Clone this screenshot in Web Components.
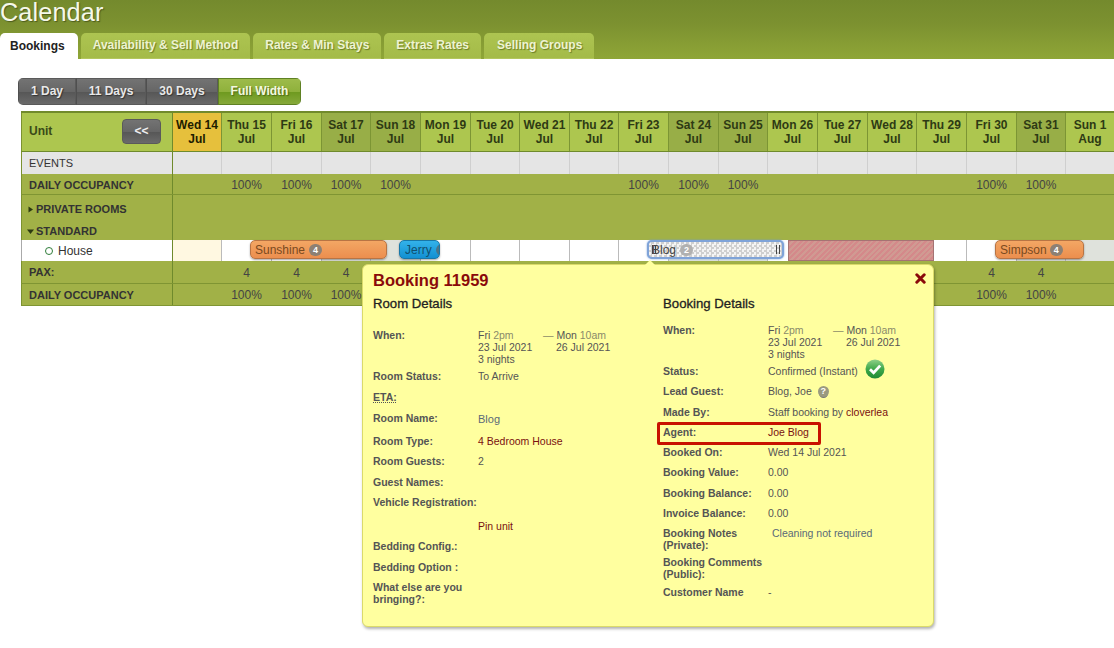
<!DOCTYPE html>
<html lang="en">
<head>
<meta charset="utf-8">
<title>Calendar</title>
<style>
html,body{margin:0;padding:0;background:#fff;height:648px;overflow:hidden;font-family:"Liberation Sans",Arial,sans-serif;}
</style>
</head>
<body>
<cal-page>
  <tab-bar slot="top" heading="Calendar">
    <tab-item active>Bookings</tab-item>
    <tab-item>Availability &amp; Sell Method</tab-item>
    <tab-item>Rates &amp; Min Stays</tab-item>
    <tab-item>Extras Rates</tab-item>
    <tab-item style="padding-left:13px">Selling Groups</tab-item>
  </tab-bar>
  <view-switch slot="top">
    <view-button>1 Day</view-button>
    <view-button>11 Days</view-button>
    <view-button>30 Days</view-button>
    <view-button active>Full Width</view-button>
  </view-switch>
  <cal-grid slot="top"></cal-grid>
  <booking-popup heading="Booking 11959">
    <info-col slot="left" heading="Room Details">
      <info-row label="When:" h="41" off="5"><stay-when></stay-when></info-row>
      <info-row label="Room Status:" h="21">To Arrive</info-row>
      <info-row label="&lt;u&gt;ETA:&lt;/u&gt;" h="21"></info-row>
      <info-row label="Room Name:" h="23"><span style="color:#5a6a78;font-size:11px;position:relative;top:1px">Blog</span></info-row>
      <info-row label="Room Type:" h="20"><span style="color:#7a1010">4 Bedroom House</span></info-row>
      <info-row label="Room Guests:" h="21">2</info-row>
      <info-row label="Guest Names:" h="20"></info-row>
      <info-row label="Vehicle Registration:" h="24"></info-row>
      <info-row label="" h="20"><span style="color:#7a1010">Pin unit</span></info-row>
      <info-row label="Bedding Config.:" h="21"></info-row>
      <info-row label="Bedding Option :" h="20"></info-row>
      <info-row label="What else are you bringing?:" h="24"></info-row>
    </info-col>
    <info-col slot="right" heading="Booking Details">
      <info-row label="When:" h="41"><stay-when></stay-when></info-row>
      <info-row label="Status:" h="20">
        <span style="display:inline-flex;align-items:center;gap:7px;height:12px">Confirmed (Instant)
          <svg width="20" height="20" viewBox="0 0 20 20" style="margin-top:-4px"><defs><linearGradient id="g" x1="0" y1="0" x2="0" y2="1"><stop offset="0" stop-color="#8fd08a"/><stop offset=".5" stop-color="#3fa94a"/><stop offset="1" stop-color="#1f8a35"/></linearGradient></defs><circle cx="10" cy="10" r="9.5" fill="url(#g)"/><path d="M5 10.2l3.6 3.6L15.2 6.6" fill="none" stroke="#fff" stroke-width="2.8"/></svg>
        </span>
      </info-row>
      <info-row label="Lead Guest:" h="21"><span style="display:inline-flex;align-items:center;gap:6px">Blog, Joe <help-badge></help-badge></span></info-row>
      <info-row label="Made By:" h="20">Staff booking by <span style="color:#7a1010">cloverlea</span></info-row>
      <info-row label="Agent:" h="20"><span style="color:#7a1010">Joe Blog</span></info-row>
      <info-row label="Booked On:" h="20">Wed 14 Jul 2021</info-row>
      <info-row label="Booking Value:" h="21">0.00</info-row>
      <info-row label="Booking Balance:" h="20">0.00</info-row>
      <info-row label="Invoice Balance:" h="20">0.00</info-row>
      <info-row label="Booking Notes (Private):" h="29"><span style="color:#5a6a78;margin-left:4px">Cleaning not required</span></info-row>
      <info-row label="Booking Comments (Public):" h="30"></info-row>
      <info-row label="Customer Name" h="20">-</info-row>
    </info-col>
  </booking-popup>
</cal-page>
<script>
function shadow(el, html){ const r = el.attachShadow({mode:'open'}); r.innerHTML = html; return r; }
const FONT = '"Liberation Sans",Arial,sans-serif';

customElements.define('cal-page', class extends HTMLElement{
  constructor(){ super(); shadow(this, `<style>
    :host{display:block;position:relative;width:1114px;height:648px;overflow:hidden;font-family:${FONT};color:#333}
    .top{display:flex;flex-direction:column}
  </style><div class="top"><slot name="top"></slot></div><slot></slot>`); }
});

customElements.define('tab-bar', class extends HTMLElement{
  constructor(){ super(); shadow(this, `<style>
    :host{display:block;height:59px;background:linear-gradient(#748a2d,#7c9130 40%,#8fa637);}
    h1{margin:0;height:33px;font:400 25.3px/24px ${FONT};color:#f6f8ea;text-shadow:1px 1px 1px #4d5c1c;letter-spacing:.1px}
    nav{display:flex;gap:3px;height:26px}
  </style><h1>${this.getAttribute('heading')}</h1><nav><slot></slot></nav>`); }
});

customElements.define('tab-item', class extends HTMLElement{
  constructor(){ super(); shadow(this, `<style>
    :host{display:flex;align-items:center;height:26px;padding:0 12px 2px;box-sizing:border-box;border-radius:5px 5px 0 0;
      background:linear-gradient(#adc451,#a4bb48);font:700 12px ${FONT};color:#eef3d2;text-shadow:1px 1px 1px #6a7d26;
      border-bottom:1px solid #b3c65e}
    :host([active]){background:#fff;color:#222;text-shadow:none;border-bottom:0;padding:0 13px 0 10px}
  </style><slot></slot>`); }
});

customElements.define('view-switch', class extends HTMLElement{
  constructor(){ super(); shadow(this, `<style>
    :host{display:flex;width:283px;height:27px;margin:19px 0 6px 18px;border-radius:5px;overflow:hidden;box-sizing:border-box;}
  </style><slot></slot>`); }
});

customElements.define('view-button', class extends HTMLElement{
  constructor(){ super(); shadow(this, `<style>
    :host{display:flex;align-items:center;justify-content:center;height:27px;padding-bottom:2px;box-sizing:border-box;font:700 12px ${FONT};color:#e8e8e8;
      text-shadow:1px 1px 1px #333;background:linear-gradient(#737373,#666 50%,#575757 54%,#6a6a6a);
      border:1px solid #5a5a5a;border-left-color:#4f4f4f}
    :host(:nth-child(1)){width:58px}
    :host(:nth-child(2)){width:70px}
    :host(:nth-child(3)){width:72px}
    :host([active]){width:83px;background:linear-gradient(#9dbb4a,#8fb13c 50%,#6f9a20 54%,#86a93a);color:#f4f8e0;border-color:#5f8123;text-shadow:1px 1px 1px #4c6a15}
  </style><slot></slot>`); }
});

const DAYS = [['Wed 14','Jul','t'],['Thu 15','Jul'],['Fri 16','Jul'],['Sat 17','Jul','w'],['Sun 18','Jul','w'],['Mon 19','Jul'],['Tue 20','Jul'],['Wed 21','Jul'],['Thu 22','Jul'],['Fri 23','Jul'],['Sat 24','Jul','w'],['Sun 25','Jul','w'],['Mon 26','Jul'],['Tue 27','Jul'],['Wed 28','Jul'],['Thu 29','Jul'],['Fri 30','Jul'],['Sat 31','Jul','w'],['Sun 1','Aug']];
const W = [49,50,50,49,50,50,49,50,49,50,50,49,50,50,49,50,50,49,49];
const occA = [0,1,1,1,1,0,0,0,0,1,1,1,0,0,0,0,1,1,0];
const below = [0,1,1,1,0,0,0,0,0,0,0,0,0,0,0,0,1,1,0];
customElements.define('cal-grid', class extends HTMLElement{
  constructor(){ super();
    const cols = '152px ' + W.map(w=>w+'px').join(' ');
    const row = (cls,label,cell)=>`<div class="row ${cls}"><div class="lab">${label}</div>${DAYS.map((d,i)=>`<div class="c">${cell(d,i)}</div>`).join('')}</div>`;
    const header = `<div class="row head"><div class="lab"><span>Unit</span><button>&lt;&lt;</button></div>${DAYS.map(d=>`<div class="c ${d[2]||''}"><b>${d[0]}<br>${d[1]}</b></div>`).join('')}</div>`;
    const tri = (d)=>`<svg width="7" height="7" viewBox="0 0 7 7"><path d="${d}" fill="#2c3a10"/></svg>`;
    shadow(this, `<style>
    :host{display:block;position:relative;width:1093px;margin-left:21px;font:12px ${FONT};color:#333}
    .row{display:grid;grid-template-columns:${cols};box-sizing:border-box}
    .lab{padding-left:7px;border-left:1px solid #7c9230;border-right:1px solid #6f8a2c;display:flex;align-items:center;box-sizing:border-box}
    .c{display:flex;align-items:center;justify-content:center;box-sizing:border-box;text-align:center;border-right:1px solid transparent;min-width:0}
    .head{height:41px;background:#adc64f;border-top:2px solid #718a2c;border-bottom:1px solid #6f8a2c;}
    .head .lab{justify-content:space-between;padding:0 11px 2px 7px;font-size:12px;font-weight:700}
    .head .c{border-right:1px solid #7c9534;line-height:14px;color:#2e3a14;font-size:12px;padding-bottom:1px;white-space:nowrap}
    .head b{font-weight:700}
    .head .t{background:#e6c03c;color:#1d1d00}
    .head .w{background:#98ae47}
    .head .lab span{font-weight:700;color:#3a4a18}
    button{all:unset;width:39px;height:25px;display:flex;align-items:center;justify-content:center;border-radius:4px;background:linear-gradient(#737373,#666 50%,#575757 54%,#6a6a6a);color:#eee;font:700 12px ${FONT};box-sizing:border-box;border:1px solid #5a5a5a}
    .events{height:22px;background:#e5e5e5}
    .events .lab{font-size:11px;background:#e5e5e5}
    .events .c{border-right:1px solid #cfcfcf}
    .occ{height:21px;background:#a1b147;border-bottom:1px solid #7f9533}
    .occ .lab{font-size:11px;font-weight:700;color:#333;padding-top:1px}
    .occ .c{font-size:12px;color:#444;padding-top:1px}
    .group{height:45px;background:#a1b147;display:grid;grid-template-columns:152px 1fr}
    .group .lab{flex-direction:column;align-items:flex-start;font-size:11px;font-weight:700;padding:0 0 0 5px;color:#333;justify-content:flex-start}
    .group .lab div{display:flex;align-items:center;gap:2px;height:22px}
    .group .lab div:first-child{height:27px;box-sizing:border-box;padding-top:1px}
    .group .lab div:last-child{margin-top:-2px}
    .house{height:21px;background:#fff;position:relative}
    .house .lab{padding-left:23px;gap:5px;font-size:12px;background:#fff;color:#333;border-left-color:#aaa}
    .house .lab i{width:8px;height:8px;border-radius:50%;border:1.2px solid #2f7d3a;box-sizing:border-box;display:block}
    .house .c{border-right:1px solid #bbb;}
    .house .t{background:#fff8e1}
    .house .w{background:#dfe2dc}
    .pax{height:23px;background:#a1b147;border-bottom:1px solid #7f9533}
    .pax .lab{font-size:11px;font-weight:700}
    .pax .c{color:#444;padding-top:1px}
    .foot{height:22px;background:#a1b147;border-bottom:1px solid #7f9533}
    .foot .lab{font-size:11px;font-weight:700}
    .foot .c{color:#444}
    .block{position:absolute;left:767px;top:0;width:146px;height:21px;box-sizing:border-box;border:1px solid #a57373;
      background:repeating-linear-gradient(135deg,#d4898a 0 2px,#d09a92 2px 4px)}
    </style>
    ${header}
    ${row('events','EVENTS',()=>'')}
    ${row('occ','DAILY OCCUPANCY',(d,i)=>occA[i]?'100%':'')}
    <div class="row group"><div class="lab"><div>${tri('M1.5 0.5L6 3.5L1.5 6.5Z')}PRIVATE ROOMS</div><div>${tri('M0 1.5H7L3.5 6Z')}STANDARD</div></div><div></div></div>
    <div class="row house"><div class="lab"><i></i>House</div>${DAYS.map((d,i)=>{const k=i===0?'t':(d[2]==='w'||i===18?'w':'');return `<div class="c ${k}"></div>`}).join('')}
      <booking-bar kind="orange" style="left:229px;width:137px;padding-left:4px" count="4">Sunshine</booking-bar>
      <booking-bar kind="blue" style="left:378px;width:41px" count="">Jerry</booking-bar>
      <booking-bar kind="sel" style="left:626px;width:137px" count="2">Blog</booking-bar>
      <div class="block"></div>
      <booking-bar kind="orange" style="left:974px;width:89px;padding-left:4px;gap:3px" count="4">Simpson</booking-bar>
    </div>
    ${row('pax','PAX:',(d,i)=>below[i]?'4':'')}
    ${row('foot','DAILY OCCUPANCY',(d,i)=>below[i]?'100%':'')}
    `); }
});

customElements.define('booking-bar', class extends HTMLElement{
  constructor(){ super();
    const c = this.getAttribute('count');
    const sel = this.getAttribute('kind')==='sel';
    shadow(this, `<style>
    :host{position:absolute;top:0;height:19px;box-sizing:border-box;border-radius:5px;display:flex;align-items:center;gap:4px;padding-left:5px;font:12px ${FONT};overflow:hidden;white-space:nowrap;z-index:1}
    :host([kind=orange]){background:linear-gradient(#f3a764,#ec8e4e);border:1px solid #b87444;color:#7a4a20;box-shadow:0 1px 2px rgba(0,0,0,.35)}
    :host([kind=blue]){background:linear-gradient(#33b2ea,#1290d2);border:1px solid #1877a8;color:#10506f;box-shadow:0 1px 2px rgba(0,0,0,.35)}
    :host([kind=sel]){border:2px solid #7fa3d8;padding-left:3px;color:#444;background-color:#fff;background-image:conic-gradient(#cfcfcf 25%,#f4f4f4 0 50%,#cfcfcf 0 75%,#f4f4f4 0);background-size:5px 5px;box-shadow:0 0 2px #6f9bd8}
    .n{display:inline-flex;width:13px;height:12px;border-radius:6px;align-items:center;justify-content:center;background:#8d8073;color:#fff;font:700 9px ${FONT};flex:none}
    :host([kind=sel]) .n{background:#b0b0b0}
    .h{position:absolute;top:3px;bottom:3px;width:4px;border-left:1px solid #444;border-right:1px solid #444;box-sizing:border-box}
    .d{width:12px;height:12px;border-radius:50%;background:#4a7488;flex:none}
    </style>${sel?'<span class="h" style="left:3px"></span><span class="h" style="right:2px"></span>':''}<span><slot></slot></span>${c?`<span class="n">${c}</span>`:'<span class="d"></span>'}`); }
});

customElements.define('booking-popup', class extends HTMLElement{
  constructor(){ super(); shadow(this, `<style>
    :host{position:absolute;left:362px;top:264px;width:572px;height:363px;box-sizing:border-box;z-index:5;background:#ffff9f;border:1px solid #dada6a;border-radius:6px;
      box-shadow:1px 2px 3px rgba(0,0,0,.3);padding:6px 10px 0;font:11px ${FONT};color:#555}
    :host::before{content:"";position:absolute;left:282px;top:-5px;border:5px solid transparent;border-top:0;border-bottom-color:#ffff9f}
    h2{margin:0;height:24px;font:700 16.5px/18px ${FONT};color:#8a0a0a}
    .cols{display:grid;grid-template-columns:290px 1fr}
    .x{position:absolute;right:7px;top:8px}
    .mark{position:absolute;left:294px;top:157px;width:164px;height:23px;box-sizing:border-box;border:3px solid #c81200;border-radius:2px;pointer-events:none}
  </style><h2>${this.getAttribute('heading')}</h2>
  <svg class="x" width="11" height="11" viewBox="0 0 11 11"><path d="M1.8 1.8L9.2 9.2M9.2 1.8L1.8 9.2" stroke="#8a0a0a" stroke-width="3" stroke-linecap="round"/></svg>
  <div class="cols"><slot name="left"></slot><slot name="right"></slot></div><div class="mark"></div>`); }
});

customElements.define('info-col', class extends HTMLElement{
  constructor(){ super(); shadow(this, `<style>
    :host{display:block}
    h3{margin:0 0 9px;height:20px;font:400 13.2px/18px ${FONT};color:#222;-webkit-text-stroke:.3px #222}
  </style><h3>${this.getAttribute('heading')}</h3><slot></slot>`); }
});

customElements.define('info-row', class extends HTMLElement{
  constructor(){ super();
    shadow(this, `<style>
    :host{display:grid;grid-template-columns:105px 1fr;font:10.5px/12px ${FONT};color:#555;height:${this.getAttribute('h')}px;padding-top:${this.getAttribute('off')||0}px}
    .l{font-weight:700;color:#555;max-width:104px}
    u{text-decoration:underline dotted}
    </style><div class="l">${this.getAttribute('label')}</div><div><slot></slot></div>`);
  }
});

customElements.define('stay-when', class extends HTMLElement{
  constructor(){ super(); shadow(this, `<style>
    :host{display:grid;grid-template-columns:65px 1fr;font:10.5px/12px ${FONT};color:#555;width:140px}
    i{font-style:normal;color:#8a8a6a}
  </style><div>Fri <i>2pm</i></div><div><i>—</i> Mon <i>10am</i></div><div>23 Jul 2021</div><div style="padding-left:13px">26 Jul 2021</div><div>3 nights</div>`); }
});

customElements.define('help-badge', class extends HTMLElement{
  constructor(){ super(); shadow(this, `<style>
    :host{display:inline-flex;width:11px;height:11px;border-radius:50%;background:#9a9a80;color:#fff;font:700 9px ${FONT};align-items:center;justify-content:center;box-shadow:0 2px 0 -1px #777}
  </style>?`); }
});
</script>
</body>
</html>
